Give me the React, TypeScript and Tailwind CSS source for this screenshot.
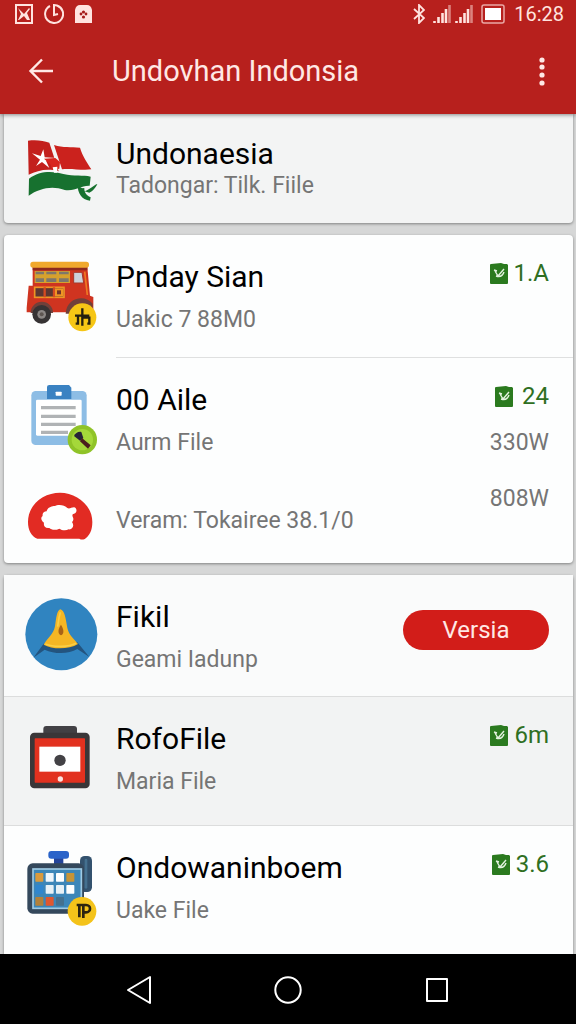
import React from 'react';
import { clsx } from 'clsx';

function FlagIcon() {
  return (
    <svg viewBox="0 0 216 216" className="w-18 overflow-visible" aria-hidden="true">
      <path d="M12 8C38 5 58 8 76 14L104 100C70 90 40 98 14 110Z" fill="#c3201d" />
      <path d="M90 21C118 30 140 26 168 29C176 56 190 74 202 94C174 98 140 90 114 94Z" fill="#cb221d" />
      <path d="M15 122C45 98 86 98 118 108C150 116 178 110 200 116L197 143C168 142 158 160 122 156C82 142 46 152 14 173Z" fill="#17712f" />
      <path d="M24 46L50 54L58 34L62 58L98 60L66 68L76 90L54 72L36 84L48 65Z" fill="#fff" />
      <path d="M60 62L94 60L108 72L106 92L84 96L80 80Z" fill="#d8251f" />
      <path d="M86 88L100 86V104H90Z" fill="#fff" />
      <path d="M160 138C162 168 172 184 198 188L200 178C186 172 180 160 181 150C174 152 166 148 160 138ZM182 160L196 164C206 160 216 148 220 138C208 142 198 154 182 160Z" fill="#17712f" />
    </svg>
  );
}

function BusIcon() {
  return (
    <svg viewBox="0 0 216 216" className="w-18 overflow-visible" aria-hidden="true">
      <path d="M26 24H190L198 110L208 114V160H8V146L14 80H26Z" fill="#cf3420" />
      <path d="M26 24H190V34H26Z" fill="#8d2a1c" />
      <rect x="19" y="8" width="176" height="18" rx="8" fill="#f0a92c" />
      <rect x="32" y="36" width="106" height="36" fill="#d6a12d" />
      <path d="M35 38H60V46H35ZM67 38H97V46H67ZM105 38H134V46H105ZM35 58H60V69H35ZM67 58H97V69H67ZM105 58H134V69H105Z" fill="#7c776c" />
      <path d="M149 40H174L179 72H149Z" fill="#ccd2db" stroke="#a5382a" strokeWidth="3" />
      <rect x="32" y="85" width="88" height="30" fill="#5c3732" stroke="#ef9424" strokeWidth="5" />
      <path d="M62 85V115M90 85V115" stroke="#d64a21" strokeWidth="7" />
      <rect x="93" y="88" width="24" height="24" fill="#ef9424" />
      <rect x="99" y="94" width="12" height="12" fill="#74332a" />
      <path d="M182 38L190 108" stroke="#ef7a24" strokeWidth="5" />
      <path d="M20 162A33 33 0 0 1 87 162ZM125 164C128 112 186 106 206 134V164Z" fill="#70403a" />
      <circle cx="53" cy="166" r="28" fill="#363334" />
      <circle cx="53" cy="166" r="13" fill="#8b8684" />
      <circle cx="53" cy="166" r="6" fill="#5d5551" />
      <circle cx="175" cy="175" r="42" fill="#f6c615" />
      <path d="M175 148V200M153 170H196M162 172V194H155M176 176H196V194H190" fill="none" stroke="#24200f" strokeWidth="7" />
    </svg>
  );
}

function ClipboardIcon() {
  return (
    <svg viewBox="0 0 216 216" className="w-18 overflow-visible" aria-hidden="true">
      <rect x="22" y="27" width="166" height="162" rx="13" fill="#8dbde5" />
      <rect x="36" y="53" width="137" height="108" rx="4" fill="#fff" />
      <path d="M69 15Q69 9 76 9H135L142 17V51H69Z" fill="#3a82c2" />
      <rect x="95" y="29" width="18" height="12" rx="2" fill="#fff" />
      <path d="M51 77H155M51 103H155M51 127H155M51 151H132" stroke="#b0b3b5" strokeWidth="10" />
      <circle cx="175" cy="173" r="44" fill="#8fc328" />
      <circle cx="175" cy="173" r="32" fill="#a5d83a" />
      <path d="M150 162C154 154 162 148 172 150L178 168L168 176Z" fill="#262338" />
      <path d="M174 168L200 190L192 200L168 178Z" fill="#4a1f1e" />
    </svg>
  );
}

function CloudIcon() {
  return (
    <svg viewBox="0 0 216 144" className="w-18 overflow-visible" aria-hidden="true">
      <path d="M12 90C12 36 60 2 108 2S205 38 205 90C205 116 196 130 186 138C180 144 172 144 166 140H40C22 134 12 114 12 90Z" fill="#e22b23" />
      <path d="M68 58C70 46 84 42 92 42C102 36 122 38 130 48C136 52 142 46 150 46C160 48 160 62 150 65C146 66 144 68 146 74C150 80 148 86 144 90C152 100 146 114 134 112C124 118 112 114 106 110C94 116 82 114 76 108C62 110 58 100 60 92C50 86 50 76 56 72C54 64 60 58 68 58Z" fill="#fff" />
    </svg>
  );
}

function BellIcon() {
  return (
    <svg viewBox="0 0 216 216" className="w-18 overflow-visible" aria-hidden="true">
      <circle cx="112" cy="106" r="108" fill="#3084c0" />
      <path d="M59 134L28 176L62 152C92 166 134 166 160 150L196 174L160 130Z" fill="#23547f" />
      <path d="M109 31C98 35 97 57 93 82C88 107 72 115 59 137C85 152 135 152 162 135C148 117 135 109 130 87C125 57 122 35 109 31Z" fill="#f5b624" />
      <path d="M109 40C104 57 103 69 101 83M64 135C88 145 134 145 156 133" fill="none" stroke="#fbcf45" strokeWidth="5" />
      <path d="M111 77C101 91 101 105 111 109C121 105 120 91 111 77Z" fill="#a86317" />
    </svg>
  );
}

function TabletIcon() {
  return (
    <svg viewBox="0 0 216 216" className="w-18 overflow-visible" aria-hidden="true">
      <rect x="58" y="15" width="101" height="36" rx="9" fill="#424044" />
      <rect x="18" y="35" width="179" height="167" rx="13" fill="#3a3638" />
      <rect x="32" y="52" width="151" height="133" rx="2" fill="#e2311f" />
      <rect x="46" y="77" width="123" height="75" fill="#fff" />
      <circle cx="108" cy="118" r="17" fill="#434145" />
      <circle cx="109" cy="174" r="8" fill="#fbe3df" />
    </svg>
  );
}

const TILES = [
  ['#d99a3d', '#eef5fa', '#fdfefe', '#c79436'],
  ['#2f86cf', '#e7f1f6', '#e7f1f6', '#fdfefe'],
  ['#b3813a', '#e0572f', '#44718f'],
];

function CalendarIcon() {
  return (
    <svg viewBox="0 0 216 216" className="w-18 overflow-visible" aria-hidden="true">
      <rect x="168" y="18" width="36" height="108" rx="14" fill="#33526e" />
      <path d="M186 30V112" stroke="#44708f" strokeWidth="8" strokeLinecap="round" />
      <path d="M90 20H118V44H90Z" fill="#24449a" />
      <rect x="73" y="3" width="62" height="23" rx="9" fill="#2a63c9" />
      <rect x="10" y="40" width="170" height="151" rx="16" fill="#34485c" />
      <rect x="27" y="57" width="145" height="118" fill="#3c86b8" stroke="#9fcbe4" strokeWidth="5" />
      {TILES.map((row, r) =>
        row.map((c, i) => <rect key={`${r}-${i}`} x={34 + i * 31} y={69 + r * 36} width="24" height="26" rx="2" fill={c} />)
      )}
      <circle cx="174" cy="184" r="43" fill="#f4c31a" />
      <path d="M158 165H176M166 165V202M178 204V165H186C202 165 202 187 186 187H180" fill="none" stroke="#2c2410" strokeWidth="8" />
    </svg>
  );
}

function Badge({ children }: { children: React.ReactNode }) {
  return (
    <span className="flex h-9 items-center gap-1.5 text-2xl text-[#2f6f22]">
      <svg viewBox="0 0 18 21" className="w-4.5" aria-hidden="true">
        <path d="M0 2Q0 1 1 1L11 0 14 1H17L18 2V20Q18 21 17 21H1Q0 21 0 20Z" fill="#2b7a1f" />
        <path d="M4 7L7 8M14 6L8 13 5 8M6 13Q12 15 14 9" fill="none" stroke="#e3f2df" strokeWidth="1.4" />
      </svg>
      <span className="min-w-[30px] text-right">{children}</span>
    </span>
  );
}

type RowProps = {
  icon: React.ReactNode;
  title: string;
  sub: string;
  right?: React.ReactNode;
  className?: string;
  tight?: boolean;
};

function Row({ icon, title, sub, right, className, tight }: RowProps) {
  return (
    <li className={clsx('flex gap-5 pl-5 pr-6', className)}>
      <div className="w-18 shrink-0 pt-6">{icon}</div>
      <div className={clsx('min-w-0 flex-1', tight ? 'pt-6' : 'pt-5')}>
        <h2 className={clsx('text-[30px] text-black', tight ? 'leading-8' : 'leading-[44px]')}>{title}</h2>
        <p className={clsx('text-[23px] text-[#757575]', tight ? 'leading-8' : 'leading-[42px]')}>{sub}</p>
      </div>
      <div className="flex shrink-0 flex-col items-end pt-5">{right}</div>
    </li>
  );
}

const card = 'rounded-sm bg-[#fdfefe] shadow-[0_1px_3px_rgba(0,0,0,0.4)]';

function StatusBar() {
  return (
    <div className="flex h-7 items-center pl-[15px] pr-3 text-[#ffe3df]">
      <div className="flex flex-1 items-center gap-[11px]">
        <svg viewBox="0 0 18 20" className="w-[18px]" aria-hidden="true">
          <path d="M1 1H17V19H1Z" fill="none" stroke="currentColor" strokeWidth="2" />
          <path d="M3 4L9 10 14 4 15 5 12 9 15 16H12L9 12 4 16H3L6 10Z" fill="currentColor" />
        </svg>
        <svg viewBox="0 0 20 20" className="w-5" fill="none" stroke="currentColor" strokeWidth="2" aria-hidden="true">
          <path d="M6 2A9 9 0 1 0 13 1.500L10 1V11L14 10" />
        </svg>
        <svg viewBox="0 0 17 18" className="w-[17px]" aria-hidden="true">
          <path d="M0 18V5Q1 0 5 0H12Q16 0 17 5V18Z" fill="currentColor" />
          <circle cx="8.5" cy="7" r="1.6" fill="#a51c1b" />
          <circle cx="8.5" cy="12" r="1.6" fill="#a51c1b" />
          <circle cx="6" cy="9" r="1.4" fill="#a51c1b" />
          <circle cx="11" cy="9" r="1.4" fill="#a51c1b" />
        </svg>
      </div>
      <div className="flex items-center gap-1">
        <svg viewBox="0 0 12 20" className="mr-1 w-3" fill="none" stroke="currentColor" strokeWidth="1.8" aria-hidden="true">
          <path d="M1 5L11 14 6 19V1L11 6 1 15" />
        </svg>
        {[0, 1].map(i => (
          <svg key={i} viewBox="0 0 18 18" className="w-[18px]" fill="none" stroke="currentColor" strokeWidth="2.6" aria-hidden="true">
            <path d="M1.5 18V16M5.5 18V12M9.5 18V8M13 18V4" />
            <path d="M16.5 18V0" opacity="0.5" />
          </svg>
        ))}
        <svg viewBox="0 0 25 20" className="ml-1 w-[25px]" aria-hidden="true">
          <rect x="1" y="1" width="22" height="18" rx="2" fill="none" stroke="currentColor" strokeWidth="1.5" opacity="0.7" />
          <rect x="4" y="4" width="16" height="12" fill="#fff" />
        </svg>
        <span className="ml-1 text-xl leading-7">16:28</span>
      </div>
    </div>
  );
}

export default function App() {
  return (
    <div className="flex min-h-screen flex-col bg-[#d6d7d7] font-['Roboto','Liberation_Sans',sans-serif]">
      <header className="relative bg-[#b7201d] shadow-[0_1px_4px_rgba(0,0,0,0.45)]">
        <StatusBar />
        <div className="flex h-[86px] items-center pl-7 pr-6">
          <button aria-label="Back" className="w-21 text-[#ffe8e5]">
            <svg viewBox="0 0 26 26" className="w-[26px]" fill="none" stroke="currentColor" strokeWidth="2.4" aria-hidden="true">
              <path d="M25 13H3M14 1.5L2.5 13 14 24.5" />
            </svg>
          </button>
          <h1 className="flex-1 pt-0.5 text-[29px] text-[#ffe8e5]">Undovhan Indonsia</h1>
          <button aria-label="More options" className="flex w-5 justify-center text-[#ffe8e5]">
            <svg viewBox="0 0 6 30" className="w-1.5" fill="currentColor" aria-hidden="true">
              <circle cx="3" cy="4" r="2.6" />
              <circle cx="3" cy="11" r="2.6" />
              <circle cx="3" cy="19" r="2.6" />
              <circle cx="3" cy="27" r="2.6" />
            </svg>
          </button>
        </div>
      </header>

      <main className="flex flex-1 flex-col gap-3 pl-1 pr-[3px]">
        <ul className="rounded-b-sm bg-[#f3f4f4] shadow-[0_1px_3px_rgba(0,0,0,0.4)]">
          <Row className="h-[109px]" icon={<FlagIcon />} title="Undonaesia" sub="Tadongar: Tilk. Fiile" tight />
        </ul>

        <ul className={card}>
          <Row className="h-[122px]" icon={<BusIcon />} title="Pnday Sian" sub="Uakic 7 88M0" right={<Badge>1.A</Badge>} />
          <li className="ml-28 h-px bg-[#dfe0e0]" />
          <Row
            className="h-[110px]"
            icon={<ClipboardIcon />}
            title="00 Aile"
            sub="Aurm File"
            right={
              <>
                <Badge>24</Badge>
                <span className="pt-2 text-[23px] leading-[42px] text-[#757575]">330W</span>
              </>
            }
          />
          <li className="flex h-[95px] gap-5 pl-5 pr-6 text-[23px] leading-[42px] text-[#757575]">
            <div className="w-18 shrink-0 pt-6"><CloudIcon /></div>
            <p className="flex-1 pt-8">Veram: Tokairee 38.1/0</p>
            <span className="pt-2.5">808W</span>
          </li>
        </ul>

        <ul className={clsx(card, 'flex-1 rounded-b-none')}>
          <Row
            className="h-[121px] bg-[#fafbfb]"
            icon={<BellIcon />}
            title="Fikil"
            sub="Geami Iadunp"
            right={
              <button className="mt-[15px] h-10 w-[146px] rounded-full bg-[#d21d19] text-2xl text-[#ffe8e5]">Versia</button>
            }
          />
          <Row
            className="h-[130px] border-y border-[#dcdddd] bg-[#f2f3f3]"
            icon={<TabletIcon />}
            title="RofoFile"
            sub="Maria File"
            right={<Badge>6m</Badge>}
          />
          <Row className="h-[128px]" icon={<CalendarIcon />} title="Ondowaninboem" sub="Uake File" right={<Badge>3.6</Badge>} />
        </ul>
      </main>

      <nav className="relative grid h-[71px] grid-cols-3 items-center justify-items-center bg-black px-16 text-white">
        <button aria-label="Back">
          <svg viewBox="0 0 26 30" className="w-[26px]" fill="none" stroke="currentColor" strokeWidth="2" strokeLinejoin="round" aria-hidden="true">
            <path d="M24 2V28L2 15Z" />
          </svg>
        </button>
        <button aria-label="Home">
          <svg viewBox="0 0 28 30" className="w-7" fill="none" stroke="currentColor" strokeWidth="2" aria-hidden="true">
            <circle cx="14" cy="15" r="12.7" />
          </svg>
        </button>
        <button aria-label="Recent apps">
          <svg viewBox="0 0 24 26" className="w-6" fill="none" stroke="currentColor" strokeWidth="2" strokeLinejoin="round" aria-hidden="true">
            <path d="M2 2H22V24H2Z" />
          </svg>
        </button>
      </nav>
    </div>
  );
}
